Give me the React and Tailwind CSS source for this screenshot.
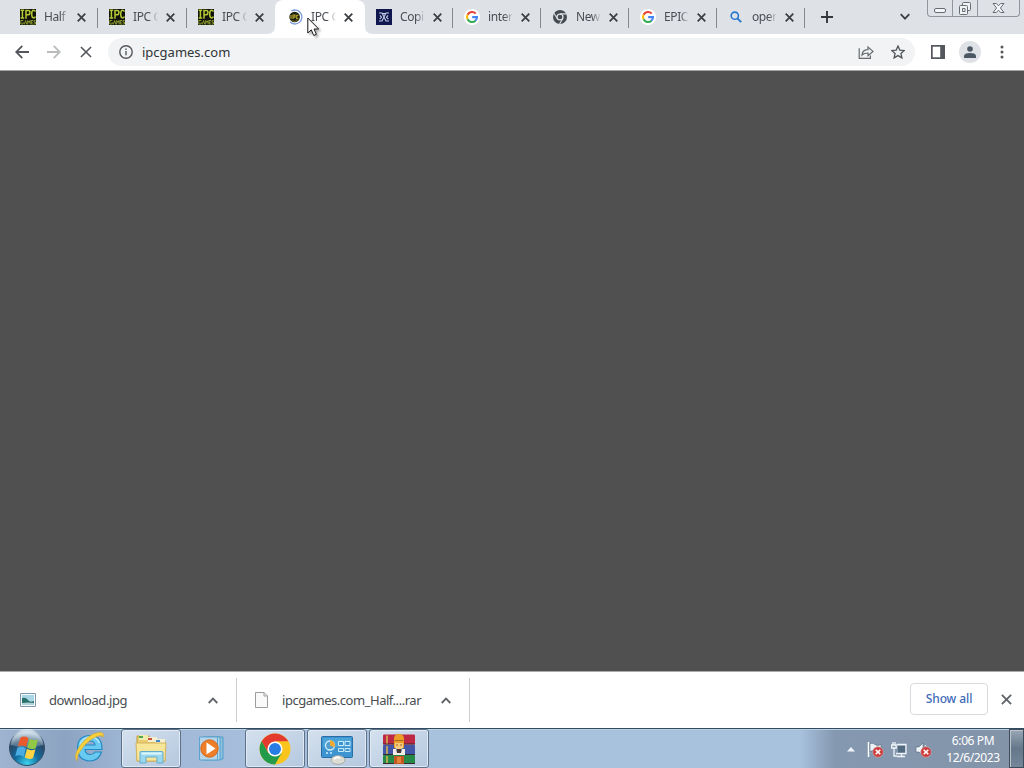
import React from "react";

const tabs = [
  { title: "Half", icon: "ipc", width: "w-[89px]", line: true },
  { title: "IPC G", icon: "ipc", width: "w-[89px]", line: true },
  { title: "IPC G", icon: "ipc", width: "w-[88px]", line: false },
  { title: "IPC G", icon: "loading", width: "w-[90px]", active: true },
  { title: "Copi", icon: "copy", width: "w-[88px]", line: true },
  { title: "inter", icon: "google", width: "w-[88px]", line: true },
  { title: "New", icon: "chrome", width: "w-[88px]", line: true },
  { title: "EPIC", icon: "google", width: "w-[88px]", line: true },
  { title: "open", icon: "search", width: "w-[88px]", line: true },
];

const Cross = ({ size = 8, className = "", weight = 1.8 }) => (
  <svg width={size} height={size} viewBox="0 0 10 10" className={className} fill="none" stroke="currentColor" strokeWidth={(weight * 10) / size}>
    <path d="M.8.8l8.4 8.4M9.2.8L.8 9.2" />
  </svg>
);

const IpcIcon = () => (
  <svg width="16" height="16" viewBox="0 0 16 16">
    <path fill="#11130a" d="M0 0h16v16H0z" />
    <g fill="none" stroke="#b5c935" strokeWidth="1.5">
      <path d="M.6 1.2h3.600M2.400 1v8M.6 9h3.600M6 9.700V1.500h2.300q1.700 0 1.700 1.900T8.300 5.700H6M15.400 2.600q-.5-1.400-1.900-1.400-1.800 0-1.800 3.900t1.800 3.900q1.400 0 1.900-1.400" />
    </g>
    <g fill="none" stroke="#97a735" strokeWidth=".9">
      <path d="M3.300 11.500H.8V15h2.400v-1.800M4.300 15.500l1.300-4 1.200 4M7.700 15.500v-4l1.200 2 1.200-2v4M13 11.500h-1.800V15H13M11.300 13.200h1.400M15.600 11.500H14v1.700h1.500V15h-2" />
    </g>
  </svg>
);

const LoadingIcon = () => (
  <svg width="16" height="16" viewBox="0 0 16 16">
    <circle cx="7.600" cy="8" r="5.300" fill="#1e2110" />
    <path d="M4.500 1.900A7 7 0 1 1 3 13" fill="none" stroke="#7d9edb" strokeWidth="1.300" />
    <path d="M4 9.800V6M6 10V6h2v2.300H6M11.500 6.200H9.700v3.600h1.800" fill="none" stroke="#bcae33" strokeWidth="1.100" />
    <path d="M4.500 11.600q3 1.600 6 0" fill="none" stroke="#77722c" />
  </svg>
);

const CopyIcon = () => (
  <svg width="16" height="16" viewBox="0 0 16 16">
    <path fill="#10174f" d="M0 0h16v16H0z" />
    <path d="M3 4h3l4 8h3M13 4h-3l-4 8H3M4 6.300l1.500 2L3.700 10M12 6.300l-1.500 2 1.800 1.700M6 4.600h4" fill="none" stroke="#c3cce5" strokeWidth="1.100" />
  </svg>
);

const GoogleIcon = () => (
  <svg width="16" height="16" viewBox="0 0 16 16">
    <circle cx="8" cy="8" r="8" fill="#fff" />
    <g fill="none" strokeWidth="2.100">
      <path d="M11.700 4.500A5 5 0 0 0 3.600 5.700" stroke="#ea4335" />
      <path d="M3.600 5.700a5 5 0 0 0 0 4.600" stroke="#fbbc05" />
      <path d="M3.600 10.300a5 5 0 0 0 7.800 1.400" stroke="#34a853" />
      <path d="M11.400 11.700A5 5 0 0 0 13 8.100H8.200" stroke="#4285f4" />
    </g>
  </svg>
);

const ChromeGrayIcon = () => (
  <svg width="16" height="16" viewBox="0 0 16 16">
    <circle cx="8" cy="8" r="7" fill="#454a50" />
    <circle cx="8" cy="8" r="3.600" fill="#dee1e6" />
    <circle cx="8" cy="8" r="2.300" fill="#454a50" />
    <path d="M8 4.900h6.500M5.200 9.500L2 4.200M10.800 9.500l-3.200 5.400" stroke="#dee1e6" strokeWidth="1.100" />
  </svg>
);

const SearchIcon = () => (
  <svg width="16" height="16" viewBox="0 0 16 16" fill="none" stroke="#2678cf">
    <circle cx="6.800" cy="6.700" r="3.600" strokeWidth="1.600" />
    <path d="M9.400 9.300l3.800 3.800" strokeWidth="1.900" />
  </svg>
);

const icons = {
  ipc: IpcIcon,
  loading: LoadingIcon,
  copy: CopyIcon,
  google: GoogleIcon,
  chrome: ChromeGrayIcon,
  search: SearchIcon,
};

const Tab = ({ tab }) => {
  const Icon = icons[tab.icon];
  return (
    <div className={`relative flex h-[34px] shrink-0 items-center ${tab.width} ${tab.active ? "rounded-t-lg bg-white pl-3" : "pl-[11px]"}`}>
      {tab.active && (
        <>
          <svg className="absolute bottom-0 -left-2" width="8" height="8"><path d="M8 0v8H0Q8 8 8 0" fill="#fff" /></svg>
          <svg className="absolute -right-2 bottom-0" width="8" height="8"><path d="M0 0v8h8Q0 8 0 0" fill="#fff" /></svg>
        </>
      )}
      <span className="h-4 w-4 shrink-0"><Icon /></span>
      <span className="ml-2 w-[25px] overflow-hidden text-[12px] leading-[18px] tracking-[-0.4px] whitespace-nowrap text-[#4b4f54] [mask-image:linear-gradient(to_right,#000_65%,transparent)]">
        {tab.title}
      </span>
      <Cross size={9} className="ml-2 shrink-0 text-[#3c4043]" />
      {tab.line && <span className="absolute top-2 right-0 h-5 w-px bg-[#85888d]" />}
    </div>
  );
};

const WindowButtons = () => (
  <div className="mr-[4px] ml-auto flex h-[17px] w-[93px] rounded-b-[4px] border border-t-0 border-[#92969c] text-[#666c74]">
    <div className="flex w-[25px] items-center justify-center border-r border-[#92969c]">
      <svg width="13" height="16" viewBox="0 0 13 16" fill="#f5f6f8" stroke="currentColor"><rect x=".5" y="8.500" width="11" height="4" rx="1.500" /></svg>
    </div>
    <div className="flex w-[25px] items-center justify-center border-r border-[#92969c]">
      <svg width="14" height="15" viewBox="0 0 14 15" fill="#f0f2f4" stroke="currentColor">
        <rect x="4.500" y="1.500" width="8" height="8" rx="1" />
        <rect x="1.500" y="4.500" width="8" height="9" rx="1" />
        <path d="M4.500 7.500h2.500v3H4.500z" />
      </svg>
    </div>
    <div className="flex flex-1 items-center justify-center">
      <svg width="13" height="12" viewBox="0 0 13 12" fill="#f5f6f8" stroke="currentColor"><path d="M1 1.500h3.300l2.200 2.300 2.200-2.300H12L8.400 6l3.600 4.500H8.700L6.500 8.200l-2.200 2.300H1L4.600 6z" /></svg>
    </div>
  </div>
);

const TabStrip = () => (
  <div className="flex h-[34px] bg-[#dee1e6] pl-[9px]">
    {tabs.map((tab, i) => <Tab key={i} tab={tab} />)}
    <svg className="mt-[11px] ml-[16px] shrink-0" width="12" height="12" viewBox="0 0 12 12" stroke="#34383c" strokeWidth="1.900"><path d="M6 0v12M0 6h12" /></svg>
    <svg className="mt-[13px] ml-[67px] shrink-0" width="10" height="8" viewBox="0 0 10 8" fill="none" stroke="#3c4043" strokeWidth="1.800"><path d="M.7 1.200L5 5.600l4.300-4.400" /></svg>
    <WindowButtons />
  </div>
);

const Arrow = ({ className }) => (
  <svg width="14" height="14" viewBox="0 0 14 14" className={className} fill="none" stroke="currentColor" strokeWidth="1.800"><path d="M14 7H1.300M7.300.8L1.200 7l6.100 6.200" /></svg>
);

const Toolbar = () => (
  <div className="flex h-[37px] items-center border-b border-[#a3a3a4] bg-white pl-[15px]">
    <Arrow className="text-[#54585d]" />
    <Arrow className="ml-[18px] rotate-180 text-[#b9bbbd]" />
    <Cross size={12} weight={1.6} className="ml-[19px] text-[#54585d]" />
    <div className="ml-[16px] flex h-7 w-[807px] items-center rounded-full bg-[#f1f3f4] pl-[11px]">
      <svg width="14" height="14" viewBox="0 0 14 14" fill="none" stroke="#54585d" strokeWidth="1.400"><circle cx="7" cy="7" r="6.200" /><path d="M7 6v4.300M7 3.500v1.400" /></svg>
      <span className="ml-[9px] text-[13px] leading-5 text-[#303338]">ipcgames.com</span>
      <svg className="ml-auto" width="16" height="16" viewBox="0 0 16 16" fill="none" stroke="#666a6e" strokeWidth="1.200"><path d="M1.200 4.200v10.200h11.200v-3M4 11c.3-3.500 2.100-5.300 6-5.300V3l5 4.400-5 4.300V9c-2.800 0-4.600.5-6 2z" /></svg>
      <svg className="mr-[10px] ml-[17px]" width="14" height="14" viewBox="0 0 14 14" fill="none" stroke="#54585d" strokeWidth="1.300"><path d="M7 1l1.800 4.100 4.400.4-3.300 3 1 4.400L7 10.600l-3.900 2.300 1-4.400-3.300-3 4.400-.4z" /></svg>
    </div>
    <svg className="ml-4" width="14" height="14" viewBox="0 0 14 14"><path fill="#54585d" d="M0 0h14v14H0z" /><path fill="#fff" d="M1.700 1.700h7.500v10.600H1.700z" /></svg>
    <div className="ml-[14px] flex h-[22px] w-[22px] items-center justify-center rounded-full bg-[#dee1e6]">
      <svg width="12" height="12" viewBox="0 0 12 12" fill="#4b5864"><circle cx="6" cy="3" r="2.800" /><path d="M0 12v-2q0-3 6-3t6 3v2z" /></svg>
    </div>
    <svg className="ml-[19px]" width="4" height="14" viewBox="0 0 4 14" fill="#54585d"><circle cx="2" cy="2" r="1.500" /><circle cx="2" cy="7" r="1.500" /><circle cx="2" cy="12" r="1.500" /></svg>
  </div>
);

const Chevron = ({ className }) => (
  <svg width="10" height="7" viewBox="0 0 10 7" className={className} fill="none" stroke="#5f6368" strokeWidth="1.800"><path d="M.7 6L5 1.600 9.300 6" /></svg>
);

const DownloadShelf = () => (
  <div className="flex h-[57px] border-t border-[#aaa] bg-white text-[13px] text-[#4a4d50]">
    <div className="mt-[6px] flex h-[44px] w-[237px] items-center border-r border-[#cdced1] pl-5">
      <svg width="16" height="14" viewBox="0 0 16 14"><path d="M.5.5h15v13H.5z" fill="#f6f9fa" stroke="#8298ad" /><path d="M2 2h12v9H2z" fill="#a8d6e4" /><path d="M2 5q4-1 6 2t6 1v3H2z" fill="#28706a" /><path d="M2 10q6-1 12 0v2H2z" fill="#afd3d8" /></svg>
      <span className="mt-0.5 ml-[13px] tracking-[-0.43px]">download.jpg</span>
      <Chevron className="mr-[18px] ml-auto" />
    </div>
    <div className="mt-[6px] flex h-[44px] w-[233px] items-center border-r border-[#cdced1] pl-[18px]">
      <svg width="13" height="16" viewBox="0 0 13 16" fill="#fafafa" stroke="#9a9da0"><path d="M.5.5H9l3.500 3.500v11.500H.5zM9 .5V4h3.500" /></svg>
      <span className="mt-0.5 ml-[14px] tracking-[-0.47px]">ipcgames.com_Half....rar</span>
      <Chevron className="mr-[18px] ml-auto" />
    </div>
    <button className="mt-[11px] ml-auto h-8 w-[78px] rounded-[4px] border border-[#d8dadf] text-[12px] font-medium tracking-[-0.1px] text-[#3e6bb8]">Show all</button>
    <Cross size={11} className="mt-[22px] mr-[12px] ml-[13px] text-[#5f6368]" />
  </div>
);

const StartOrb = () => (
  <svg width="38" height="38" viewBox="0 0 38 38">
    <defs>
      <radialGradient id="orb" cx=".5" cy=".95" r=".9"><stop offset="0" stopColor="#3bd5ed" /><stop offset=".4" stopColor="#126b9e" /><stop offset=".75" stopColor="#294867" /><stop offset="1" stopColor="#afc4d5" /></radialGradient>
      <linearGradient id="shine" x2="0" y2="1"><stop stopColor="#eaf4fa" stopOpacity=".85" /><stop offset="1" stopColor="#a4bed1" stopOpacity=".3" /></linearGradient>
    </defs>
    <circle cx="19" cy="19" r="17.500" fill="url(#orb)" stroke="#334d66" />
    <path d="M3 16a16 16 0 0 1 32 0q-16 5-32 0" fill="url(#shine)" />
    <path d="M12.500 8.500q4-2 8 .5l-2.300 9q-4-2.500-8.500-.5z" fill="#e95b2c" />
    <path d="M21.500 9.700q4 2.500 8.500.5l-2.300 9q-4 2-8.500-.5z" fill="#91c845" />
    <path d="M9.400 18.700q4.300-2 8.500.5l-2.200 8.500q-4-2.500-8.500-.5z" fill="#4babe3" />
    <path d="M18.900 19.800q4 2.500 8.500.5l-2.300 8.700q-4 2-8.400-.5z" fill="#fbd344" />
  </svg>
);

const InternetExplorer = () => (
  <svg width="32" height="32" viewBox="0 0 32 32">
    <path d="M29 18.500H12q.5 5 5.500 5 3 0 4.500-2.500h6.500Q26 30 16.500 30 4.500 29 4.500 17T17 4.500Q29.500 5 29 18.500zM12 14h10q-.5-4-5-4t-5 4z" fill="#68caf0" stroke="#2789c3" strokeWidth="1.200" />
    <path d="M7 14Q9 6.500 17 6q7 0 9.500 6" fill="none" stroke="#b2e7f8" strokeWidth="1.500" />
    <path d="M4.500 30C-3 25 13 1.500 27 1.500q5 0 3 5 .2-2.500-3.500-1.700C15 7 2 24 4.500 30" fill="#f8d03a" stroke="#d6a42b" strokeWidth=".6" />
  </svg>
);

const ExplorerFolder = () => (
  <svg width="34" height="32" viewBox="0 0 34 32">
    <path d="M3 3h12v5h16v20H3z" fill="#e8cc6e" stroke="#bf9c45" />
    <path d="M5 2h9v5H5z" fill="#f3ebab" /><path d="M5 3h4v2H5z" fill="#4ca64c" />
    <path d="M14 4h9v5h-9z" fill="#f4efd1" /><path d="M14 5h4v2h-4z" fill="#c95039" />
    <path d="M22 6h9v5h-9z" fill="#f4efd1" /><path d="M22 7h4v2h-4z" fill="#4489ca" />
    <path d="M2 10h30l-1 18H3z" fill="#f7e69a" stroke="#d3b45e" />
    <path d="M6 30V19.500q0-1 1-1h21q1 0 1 1V30h-6v-6H12v6z" fill="#99d8ef" stroke="#63acd0" />
    <path d="M7.500 20.500h20" stroke="#dff6fb" strokeWidth="2" />
  </svg>
);

const MediaPlayer = () => (
  <svg width="28" height="28" viewBox="0 0 28 28">
    <path d="M9 2h16v22H9z" fill="#8cc3e2" stroke="#519dc9" /><path d="M5 2h17v23H5z" fill="#b4d9ed" stroke="#519dc9" />
    <path d="M1.500 2h18v23h-18z" fill="#b6d5e8" stroke="#5da5ce" />
    <circle cx="11.500" cy="13.500" r="8.700" fill="#ed7f29" stroke="#d36a21" /><path d="M8.500 7.500l9 6-9 6z" fill="#fff" />
  </svg>
);

const Chrome = () => (
  <svg width="32" height="32" viewBox="0 0 32 32">
    <circle cx="16" cy="16" r="15.500" fill="#f9c51d" />
    <path d="M2.600 8.300A15.500 15.500 0 0 1 29.400 8.300H16L9.300 19.900z" fill="#e33b2e" />
    <path d="M2.600 8.300A15.500 15.500 0 0 0 16 31.500l6.700-11.600H9.300z" fill="#249b4b" />
    <circle cx="16" cy="16" r="7.600" fill="#fff" /><circle cx="16" cy="16" r="6" fill="#287de4" />
  </svg>
);

const ControlPanel = () => (
  <svg width="34" height="32" viewBox="0 0 34 32">
    <rect x="1.500" y="3.500" width="31" height="21" rx="1" fill="#3d94d0" stroke="#286ea6" />
    <path d="M3 5h28v9H3z" fill="#4ba4d9" />
    <circle cx="10" cy="12.500" r="4.500" fill="#529fcf" stroke="#d4eef8" strokeWidth="1.300" /><path d="M10 12.500V7.200a5 5 0 0 1 4.500 7z" fill="#f3a831" />
    <path d="M18.500 8.500h5v4h-5zM25 8.500h5v4h-5zM18.500 15.500h5v3h-5zM25 15.500h5v3h-5z" fill="#3d94d0" stroke="#c8ebf7" />
    <path d="M6 20h2M10 20h2" stroke="#d4eef8" strokeWidth="1.500" />
    <ellipse cx="18" cy="27" rx="7" ry="4.300" fill="#dddcd3" stroke="#a9aaa4" /><path d="M14 26q3-3 6-1" fill="none" stroke="#fff" strokeWidth="2" />
  </svg>
);

const WinRar = () => (
  <svg width="34" height="32" viewBox="0 0 34 32">
    <rect x="1" y="1.500" width="32" height="10" rx="1" fill="#bd2944" /><rect x="1" y="12" width="32" height="10" rx="1" fill="#4355a7" /><rect x="1" y="22" width="32" height="9" rx="1" fill="#26894a" />
    <path d="M1 11h32M1 21.500h32M1 30.500h32" stroke="#3a2630" />
    <path d="M5 2.500v8M5 13v8M5 23v7" stroke="#d9b64d" strokeWidth="1.500" />
    <path d="M12 23h10v8H12z" fill="#c35724" />
    <path d="M12 15V6q0-5 5-5t5 5v9z" fill="#eb9d29" /><path d="M13 10h8v5q-4 4-8 0z" fill="#f4c980" />
    <path d="M12.500 7.500h9M14 12h2M18 12h2" stroke="#a96522" strokeWidth="1.200" />
    <path d="M11 16h3l1 4h4l1-4h3v6H11z" fill="#f4eee5" /><path d="M15 16h4v4h-4z" fill="#47352f" />
    <path d="M15 24h4v6h-4z" fill="#e2843b" />
  </svg>
);

const TaskButton = ({ children, className = "" }) => (
  <div className={`flex h-[39px] w-[60px] items-center justify-center rounded-[3px] border border-[#5d7188] bg-linear-to-br from-[#d4e1ee] to-[#b5c8df] shadow-[inset_0_0_0_1px_#e0eaf4] ${className}`}>{children}</div>
);

const RedBadge = ({ x }) => (
  <g transform={`translate(${x} 10)`}><circle r="5.300" fill="#ce3c3b" stroke="#c5a5aa" strokeWidth=".7" /><path d="M-2.300-2.300l4.600 4.600M2.300-2.300l-4.600 4.600" stroke="#fff" strokeWidth="1.600" /></g>
);

const Taskbar = () => (
  <div className="flex h-10 border-t border-[#314b60] bg-[linear-gradient(to_right,#9eb4d0_0,#8ca3c1_65px,#9eb7d5_125px,#a6bddb_240px,#a8c1dd_430px,#a8c1dd_800px,#8498b0_835px,#8394a8_1024px)] shadow-[inset_0_1px_#bdd2e3]">
    <div className="ml-2"><StartOrb /></div>
    <div className="mt-[2px] ml-[27px]"><InternetExplorer /></div>
    <TaskButton className="ml-4"><ExplorerFolder /></TaskButton>
    <div className="mt-[6px] ml-[17px]"><MediaPlayer /></div>
    <TaskButton className="ml-[19px]"><Chrome /></TaskButton>
    <TaskButton className="ml-[2px]"><ControlPanel /></TaskButton>
    <TaskButton className="ml-[2px]"><WinRar /></TaskButton>
    <svg className="mt-[18px] ml-auto" width="8" height="5" viewBox="0 0 8 5"><path d="M0 4.500L4 0l4 4.500z" fill="#f1f6fb" /></svg>
    <svg className="mt-[13px] ml-[12px]" width="17" height="16" viewBox="0 0 17 16">
      <path d="M1.500 0v15" stroke="#fff" strokeWidth="1.500" /><path d="M3 1.500q3-1 5 1t6 0v7q-3 2-5 0t-6 0z" fill="#edf2f7" stroke="#51687e" strokeWidth=".6" /><RedBadge x={11} />
    </svg>
    <svg className="mt-[13px] ml-[7px]" width="17" height="16" viewBox="0 0 17 16" fill="none" stroke="#eff5fa" strokeWidth="1.300">
      <path d="M6 2.500h9v9H5M6 14.500h8M10.500 12v2.500M2 0v3M4 0v3M.7 3h4.500v3H.7zM3 6v8h3" /><path d="M7 4h7v6.500H7z" fill="#526b81" stroke="none" />
    </svg>
    <svg className="mt-[13px] ml-[7px]" width="17" height="16" viewBox="0 0 17 16">
      <path d="M1 5h3l4-4v13l-4-4H1z" fill="#f0f5fa" stroke="#536779" strokeWidth=".6" /><path d="M10 3q3 3 1 9" fill="none" stroke="#edf4f8" /><RedBadge x={11} />
    </svg>
    <div className="mt-[3px] ml-[8px] w-[66px] text-center text-[12px] leading-[17px] tracking-[-0.4px] text-white"><div>6:06 PM</div><div>12/6/2023</div></div>
    <div className="ml-[3px] h-[39px] w-[15px] border border-[#3e4c5b] bg-linear-to-b from-[#9aa8b6] via-[#65778a] to-[#75869a] shadow-[inset_1px_1px_#bbc4cd]" />
  </div>
);

const Cursor = () => (
  <svg className="absolute top-[17px] left-[307px] drop-shadow-[2px_2px_1px_rgba(0,0,0,0.3)]" width="13" height="20" viewBox="0 0 13 20"><path d="M.8 1v15l3.500-3.200 2.400 5.700 2.700-1.200L7 12h4.700z" fill="#fff" stroke="#171717" /></svg>
);

const App = () => (
  <div className="relative flex h-[768px] w-[1024px] flex-col overflow-hidden font-['Noto_Sans','Open_Sans',sans-serif]">
    <TabStrip />
    <Toolbar />
    <main className="flex-1 bg-[#505050]" />
    <DownloadShelf />
    <Taskbar />
    <Cursor />
  </div>
);

export default App;
